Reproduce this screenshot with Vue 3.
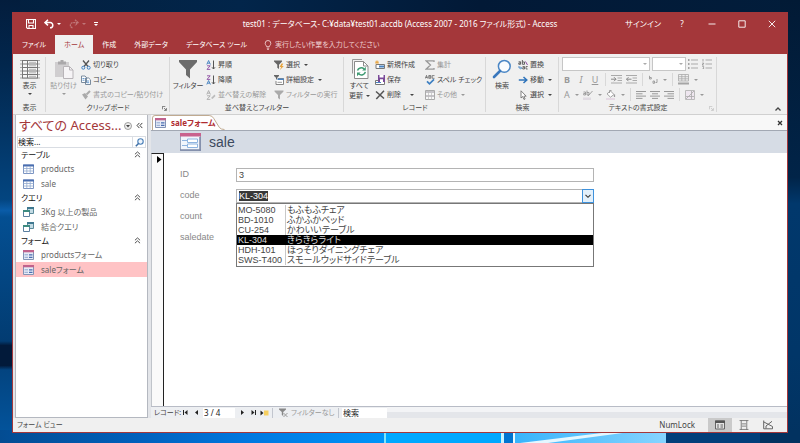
<script setup>
import { ref, onMounted } from 'vue'

const tabs = [
  { label: 'ファイル' },
  { label: 'ホーム', active: true },
  { label: '作成' },
  { label: '外部データ' },
  { label: 'データベース ツール' },
]

const groups = [
  {
    key: 'view',
    label: '表示',
    big: { icon: 'view', lines: ['表示'], caretBelow: true },
    columns: [],
  },
  {
    key: 'clipboard',
    label: 'クリップボード',
    launcher: true,
    big: { icon: 'paste', lines: ['貼り付け'], caretBelow: true, disabled: true },
    columns: [
      [
        { icon: 'cut', label: '切り取り' },
        { icon: 'copy', label: 'コピー' },
        { icon: 'brush', label: '書式のコピー/貼り付け', disabled: true },
      ],
    ],
  },
  {
    key: 'filter',
    label: '並べ替えとフィルター',
    big: { icon: 'funnel', lines: ['フィルター'] },
    columns: [
      [
        { icon: 'asc', label: '昇順' },
        { icon: 'desc', label: '降順' },
        { icon: 'unsort', label: '並べ替えの解除', disabled: true },
      ],
      [
        { icon: 'funnel-bolt', label: '選択', caret: true },
        { icon: 'funnel-adv', label: '詳細設定', caret: true },
        { icon: 'funnel-small', label: 'フィルターの実行', disabled: true },
      ],
    ],
  },
  {
    key: 'records',
    label: 'レコード',
    big: { icon: 'refresh', lines: ['すべて', '更新'], caret: true },
    columns: [
      [
        { icon: 'new', label: '新規作成' },
        { icon: 'save-record', label: '保存' },
        { icon: 'delete', label: '削除', caret: true, wide: true },
      ],
      [
        { icon: 'sigma', label: '集計', disabled: true },
        { icon: 'spell', label: 'スペル チェック' },
        { icon: 'more', label: 'その他', caret: true, disabled: true },
      ],
    ],
  },
  {
    key: 'find',
    label: '検索',
    big: { icon: 'find', lines: ['検索'] },
    columns: [
      [
        { icon: 'replace', label: '置換' },
        { icon: 'goto', label: '移動', caret: true },
        { icon: 'pointer', label: '選択', caret: true },
      ],
    ],
  },
]

const navGroups = [
  { label: 'テーブル', icon: 'table', items: ['products', 'sale'] },
  { label: 'クエリ', icon: 'query', items: ['3Kg 以上の製品', '結合クエリ'] },
  { label: 'フォーム', icon: 'form', items: ['productsフォーム', 'saleフォーム'] },
]
const openObject = 'saleフォーム'

const products = [
  ['MO-5080', 'もふもふチェア'],
  ['BD-1010', 'ふかふかベッド'],
  ['CU-254', 'かわいいテーブル'],
  ['KL-304', 'きらきらライト'],
  ['HDH-101', 'ほっそりダイニングチェア'],
  ['SWS-T400', 'スモールウッドサイドテーブル'],
]
const code = ref('KL-304')
const codeInput = ref(null)

onMounted(() => {
  codeInput.value.focus()
  codeInput.value.select()
})
</script>

<template>
  <div class="desktop">
    <svg class="wallpaper" viewBox="0 0 800 443" preserveAspectRatio="none" aria-hidden="true">
      <defs>
        <linearGradient id="wl" x1="0" y1="0" x2="0" y2="1">
          <stop offset="0" stop-color="#031d3d" /><stop offset=".14" stop-color="#02264c" />
          <stop offset=".3" stop-color="#033565" /><stop offset=".45" stop-color="#034580" />
          <stop offset=".475" stop-color="#0a5ca8" /><stop offset=".49" stop-color="#044f92" />
          <stop offset=".77" stop-color="#023c72" /><stop offset=".78" stop-color="#021a3a" />
          <stop offset=".825" stop-color="#021a3a" /><stop offset=".835" stop-color="#034480" />
          <stop offset="1" stop-color="#0356a0" />
        </linearGradient>
        <linearGradient id="wr" x1="0" y1="0" x2="0" y2="1">
          <stop offset="0" stop-color="#021a35" /><stop offset=".4" stop-color="#012448" />
          <stop offset=".46" stop-color="#01386c" /><stop offset=".8" stop-color="#013668" />
          <stop offset="1" stop-color="#023260" />
        </linearGradient>
        <linearGradient id="wt" x1="0" y1="0" x2="1" y2="0">
          <stop offset="0" stop-color="#03203f" /><stop offset=".3" stop-color="#02254a" />
          <stop offset=".6" stop-color="#021936" /><stop offset="1" stop-color="#021d3b" />
        </linearGradient>
        <linearGradient id="wb" x1="0" y1="0" x2="1" y2="0">
          <stop offset="0" stop-color="#034c92" /><stop offset=".36" stop-color="#0060bc" />
          <stop offset=".65" stop-color="#0078e0" /><stop offset="1" stop-color="#0094f8" />
        </linearGradient>
        <linearGradient id="wp" x1="0" y1="0" x2="1" y2="0">
          <stop offset="0" stop-color="#38b4fb" /><stop offset="1" stop-color="#86d4ff" />
        </linearGradient>
      </defs>
      <rect width="800" height="443" fill="url(#wt)" />
      <rect width="20" height="443" fill="url(#wl)" />
      <rect x="780" width="20" height="443" fill="url(#wr)" />
      <rect y="430" width="384" height="13" fill="url(#wb)" />
      <rect x="384" y="430" width="2" height="13" fill="#7fe4fb" />
      <rect x="386" y="430" width="115" height="13" fill="#00a8ff" />
      <rect x="501" y="430" width="3" height="13" fill="#c8f4ff" />
      <rect x="504" y="430" width="9" height="13" fill="#0074d0" />
      <rect x="513" y="430" width="2" height="13" fill="#e8fbff" />
      <rect x="515" y="430" width="151" height="13" fill="url(#wp)" />
      <path d="M520 443L610 432H630L548 443Z" fill="#e4f7ff" />
      <rect x="666" y="430" width="134" height="13" fill="#023f7a" />
      <rect x="760" y="430" width="40" height="13" fill="#023260" />
    </svg>

    <svg class="defs" aria-hidden="true">
      <symbol id="caret" viewBox="0 0 4 2"><path d="M0 0H4L2 2Z" fill="currentColor" /></symbol>
      <symbol id="save" viewBox="0 0 10 10"><path d="M.5.5H9.500V9.500H1.500L.5 8.500ZM2.500.5V4H7.500V.5M3 9.500V6.500H7V9.500" fill="none" stroke="currentColor" stroke-width="1.100" /></symbol>
      <symbol id="undo" viewBox="0 0 10 10"><path d="M4 .8L1 3.600L4 6.400M1.200 3.600H6.200C9.700 3.600 9.700 8.800 6 8.800" fill="none" stroke="currentColor" stroke-width="1.500" /></symbol>
      <symbol id="redo" viewBox="0 0 10 10"><path d="M6 .8L9 3.600L6 6.400M8.800 3.600H4C.5 3.600.5 8.800 4 8.800" fill="none" stroke="currentColor" stroke-width="1.300" stroke-dasharray="2 .6" /></symbol>
      <symbol id="bulb" viewBox="0 0 8 10"><path d="M2.600 6.700C2.600 5.500 1.200 5 1.200 3.300A2.800 2.800 0 0 1 6.800 3.300C6.800 5 5.400 5.500 5.400 6.700ZM2.800 8.200H5.200M3.200 9.500H4.800" fill="none" stroke="currentColor" stroke-width=".9" /></symbol>

      <symbol id="view" viewBox="0 0 20 20"><path d="M0 1.500H20M0 5H20M0 8.500H20M0 12H20M0 15.500H20M0 19H20" stroke="#a8a8a8" /><rect x="2.500" y="1.500" width="15" height="17.500" fill="#f8f8f8" stroke="#777" /><path d="M7.500 2V19M2 5H18M2 8.500H18M2 12H18M2 15.500H18" stroke="#777" /><path d="M9 3.300H16M9 6.800H16M9 10.300H16M9 13.800H16M9 17.300H16" stroke="#b5b5b5" /></symbol>
      <symbol id="paste" viewBox="0 0 20 20"><path d="M1 3H15V18H1Z" fill="#d0ced0" /><path d="M4 2.500H6.500V1H9.500V2.500H12V5.500H4Z" fill="#aaa8aa" /><path d="M9.500 7.500H15.500L19 11V19.500H9.500Z" fill="#f6f4f6" stroke="#b8b4b8" /><path d="M15.500 7.500V11H19" fill="none" stroke="#b8b4b8" /></symbol>
      <symbol id="funnel" viewBox="0 0 20 20"><path d="M1 1H19V3L12 10.500V19.500L8 16V10.500L1 3Z" fill="#6c6c6c" /></symbol>
      <symbol id="refresh" viewBox="0 0 20 20"><path d="M2.500 14.500V.5H12" fill="none" stroke="#999" /><path d="M4.500 2.500H13.500L18 7V19.500H4.500Z" fill="#fff" stroke="#8b8b8b" /><path d="M13.500 2.500V7H18" fill="none" stroke="#8b8b8b" /><path d="M7.500 11.500A4 3.600 0 0 1 14 9.800M15.300 12.800A4 3.600 0 0 1 8.700 15" fill="none" stroke="#3e9a72" stroke-width="1.500" /><path d="M15.800 7.800V11.500H12.200ZM7 17.200V13.400H10.600Z" fill="#3e9a72" /></symbol>
      <symbol id="find" viewBox="0 0 20 20"><circle cx="12.300" cy="7.300" r="5.900" fill="#fafcfe" stroke="#4a86c5" stroke-width="1.500" /><path d="M8 12L2 18" stroke="#3a78bd" stroke-width="2.600" stroke-linecap="round" /></symbol>

      <symbol id="cut" viewBox="0 0 10 10"><path d="M2 .5L7 6.500M8 .5L3 6.500" stroke="#555" stroke-width="1.300" /><circle cx="2.300" cy="7.700" r="1.500" fill="none" stroke="#3f80c2" /><circle cx="7.700" cy="7.700" r="1.500" fill="none" stroke="#3f80c2" /></symbol>
      <symbol id="copy" viewBox="0 0 10 10"><path d="M.5 1H4L5.500 2.500V7.500H.5ZM4.500 3H7.700L9.500 4.800V9.500H4.500Z" fill="#fff" stroke="#6b7f94" stroke-width=".9" /><path d="M1.500 3.500H3.500M1.500 5.200H3.500M5.700 6H8.200M5.700 7.700H8.200" stroke="#3f80c2" stroke-width=".8" /></symbol>
      <symbol id="brush" viewBox="0 0 10 10"><path d="M1 4.500L4 3L7 6.500L4.500 9.500Z" fill="#aaa" /><path d="M5.500 4.500L9 1" stroke="#aaa" stroke-width="2" /></symbol>
      <symbol id="asc" viewBox="0 0 10 10"><path d="M.8 4.500L2.600.5L4.400 4.500M1.500 3.200H3.700" fill="none" stroke="#3f7fc0" stroke-width=".9" /><path d="M1 5.800H4.200L1 9.400H4.300" fill="none" stroke="#8a4aa0" stroke-width=".9" /><path d="M7.500.5V9M6 7.300L7.500 9L9 7.300" fill="none" stroke="#555" /></symbol>
      <symbol id="desc" viewBox="0 0 10 10"><path d="M1 .8H4.200L1 4.400H4.300" fill="none" stroke="#8a4aa0" stroke-width=".9" /><path d="M.8 9.500L2.600 5.500L4.400 9.500M1.500 8.200H3.700" fill="none" stroke="#3f7fc0" stroke-width=".9" /><path d="M7.500.5V9M6 7.300L7.500 9L9 7.300" fill="none" stroke="#555" /></symbol>
      <symbol id="unsort" viewBox="0 0 10 10"><path d="M.8 4.500L2.600.5L4.400 4.500M1.500 3.200H3.700M1 5.800H4.200L1 9.400H4.300" fill="none" stroke="#aaa" stroke-width=".9" /><path d="M5 8L8.500 4.500L9.500 6L6.500 9Z" fill="#bbb" /></symbol>
      <symbol id="funnel-bolt" viewBox="0 0 10 10"><path d="M0 .5H8V1.500L5 4.800V9L3.300 7.700V4.800L0 1.500Z" fill="#666" /><path d="M7.500 3.500L5.500 7H7.200L6 10L9.800 6H8L9.300 3.500Z" fill="#e8a33c" /></symbol>
      <symbol id="funnel-adv" viewBox="0 0 10 10"><path d="M0 0H5V1L3.200 2.800V5L2 4V2.800L0 1Z" fill="#666" /><path d="M4 3.500H9.500V9.500H2V6" fill="#fff" stroke="#777" stroke-width=".9" /><path d="M3.500 3.500H9.900V5H3.500Z" fill="#4a84c2" /><path d="M3.500 7.300H8" stroke="#999" /></symbol>
      <symbol id="funnel-small" viewBox="0 0 10 10"><path d="M.5.5H9.500V1.500L6 5V9.500L4 8V5L.5 1.500Z" fill="#aaa" /></symbol>
      <symbol id="new" viewBox="0 0 10 10"><path d="M1 4.500H9.500V8.500H1Z" fill="#fff" stroke="#777" /><path d="M4 5.500H9V7.500H4Z" fill="#4a84c2" /><path d="M2 .3V4.300M0 2.300H4M.6.9L3.400 3.700M3.400.9L.6 3.700" stroke="#e8a33c" stroke-width=".8" /></symbol>
      <symbol id="save-record" viewBox="0 0 10 10"><path d="M.5 5.500H9.500V9.500H.5Z" fill="#fff" stroke="#777" /><path d="M1 7.500H6" stroke="#4a84c2" /><path d="M3 0H10V7H3Z" fill="#7a4a98" /><path d="M4.500 0H8.500V2.500H4.500ZM5 4.300H8V7H5Z" fill="#fff" /></symbol>
      <symbol id="delete" viewBox="0 0 10 10"><path d="M1 1.500L9 8.500M9 .8L1.300 9" stroke="#555" stroke-width="1.500" /></symbol>
      <symbol id="sigma" viewBox="0 0 10 10"><path d="M9 2V.8H1L5.500 5L1 9.200H9V8" fill="none" stroke="#999" stroke-width="1.300" /></symbol>
      <symbol id="spell" viewBox="0 0 10 10"><path d="M.3 3.500L1.500.4L2.700 3.500M.8 2.500H2.200M3.800.5V3.300H5.800V.5H3.800M3.800 1.900H5.800M9.500.6H7.200V3.300H9.500" fill="none" stroke="#555" stroke-width=".7" /><path d="M2 6.300L4.500 8.800L9 4.300" fill="none" stroke="#3f80c2" stroke-width="1.700" /></symbol>
      <symbol id="more" viewBox="0 0 10 10"><path d="M.5.500H9.500V9.500H.5Z" fill="#f8f8f8" stroke="#aaa" /><path d="M1 1H9V3H1ZM1 5H9V7H1Z" fill="#c5c3c8" /><path d="M3.500.5V9.500M6.500 3V9.500" stroke="#bbb" stroke-width=".7" /></symbol>
      <symbol id="replace" viewBox="0 0 10 10"><path d="M.6 1.800H2.600V4.300H.8V3H2.600M4.400 0V4.300H6.500V2H4.400" fill="none" stroke="#555" stroke-width=".9" /><path d="M4.600 6.500H6.500V9H4.700V7.700H6.500M9.700 6.500H8V9H9.700" fill="none" stroke="#555" stroke-width=".8" /><path d="M1 6V8H3.500M2.500 7L3.700 8L2.500 9" fill="none" stroke="#3f80c2" stroke-width=".9" /><path d="M7.500 1.500L9.500 5" stroke="#8a4aa0" /></symbol>
      <symbol id="goto" viewBox="0 0 10 10"><path d="M.8 5H8.500M5.500 2L8.800 5L5.500 8" fill="none" stroke="#2f74bb" stroke-width="1.500" /></symbol>
      <symbol id="pointer" viewBox="0 0 10 10"><path d="M3 .8V8L4.700 6.500L6 9.500L7.100 9L5.900 6.200H8.200Z" fill="#fff" stroke="#666" stroke-width=".8" /></symbol>
      <symbol id="launcher" viewBox="0 0 6 6"><path d="M.5 4V.5H4M2.500 2.500L5 5M5.300 2.500V5.300H2.500" fill="none" stroke="currentColor" stroke-width=".8" /></symbol>

      <symbol id="bullets" viewBox="0 0 10 10"><path d="M0 1H1.500M0 5H1.500M0 9H1.500" stroke="#888" stroke-width="1.500" /><path d="M3 1H10M3 5H10M3 9H10" stroke="#aaa" /></symbol>
      <symbol id="numbers" viewBox="0 0 10 10"><path d="M1 0V2.500M.3 4H1.600V5H.4V6.200H1.700M.3 7.500H1.600V10H.3" fill="none" stroke="#888" stroke-width=".7" /><path d="M3.500 1H10M3.500 5H10M3.500 9H10" stroke="#aaa" /></symbol>
      <symbol id="outdent" viewBox="0 0 11 10"><path d="M0 1H11M6.500 3.500H11M6.500 6H11M0 8.500H11" stroke="#aaa" /><path d="M0 4.700H5M3 2.700L5 4.700L3 6.700" fill="none" stroke="#888" /></symbol>
      <symbol id="indent" viewBox="0 0 11 10"><path d="M0 1H11M6.500 3.500H11M6.500 6H11M0 8.500H11" stroke="#aaa" /><path d="M.5 4.700H5.500M2.500 2.700L.5 4.700L2.500 6.700" fill="none" stroke="#888" /></symbol>
      <symbol id="direction" viewBox="0 0 10 10"><path d="M1.500 .8V4H3.300V2.500H1.500M5 6H6.500V8.300H5V6M9 4V7.500H7.500" fill="none" stroke="#999" stroke-width=".9" /></symbol>
      <symbol id="gridlines" viewBox="0 0 11 11"><path d="M.5.5H10.500V7H.5ZM.5 2.700H10.500M.5 4.800H10.500M3.800.5V7M7.200.5V7" fill="none" stroke="#aaa" stroke-width=".8" /><path d="M0 8.500H11V10.500H0Z" fill="#a5a5a5" /></symbol>
      <symbol id="highlight" viewBox="0 0 10 10"><path d="M.5 2H2.500V5H.7V3.500H2.500M4 .5V5H6V2.500H4M9.500 1L5 6" fill="none" stroke="#999" stroke-width=".9" /><path d="M0 7.500H8V10H0Z" fill="#e0dbe2" /></symbol>
      <symbol id="bucket" viewBox="0 0 10 10"><path d="M1 3.800L4.500 1L8 4.500L4.500 7.200ZM3.500 3V.5H5.500" fill="#fff" stroke="#999" stroke-width=".9" /><path d="M8.500 4.500V7" stroke="#999" stroke-width="1.200" /><path d="M0 8H9V10H0Z" fill="#e5d9e4" /></symbol>
      <symbol id="left" viewBox="0 0 10 8"><path d="M0 .5H10M0 2.800H6.500M0 5.100H10M0 7.400H6.500" stroke="#999" /></symbol>
      <symbol id="center" viewBox="0 0 10 8"><path d="M0 .5H10M2 2.800H8M0 5.100H10M2 7.400H8" stroke="#999" /></symbol>
      <symbol id="right" viewBox="0 0 10 8"><path d="M0 .5H10M3.500 2.800H10M0 5.100H10M3.500 7.400H10" stroke="#999" /></symbol>
      <symbol id="altrow" viewBox="0 0 10 10"><path d="M.5.5H9.500V9.500H.5Z" fill="#eee6ef" stroke="#bbb" /><path d="M1 9L9 1M1 6.500H9M6.500 1V9" stroke="#aaa" stroke-width=".8" /></symbol>

      <symbol id="table" viewBox="0 0 11 10"><path d="M.5 1H10.500V9.500H.5Z" fill="#fff" stroke="#7c95c2" /><path d="M0 .5H11V2.500H0Z" fill="#4a6fb0" /><path d="M.5 4.500H10.500M.5 7H10.500M3.800 2V9.500M7.200 2V9.500" stroke="#93abcf" stroke-width=".8" /></symbol>
      <symbol id="query" viewBox="0 0 11 10"><path d="M4.500.5H10.500V6.500H4.500Z" fill="#c3dbe4" stroke="#5b8a9a" /><path d="M4 0H11V2H4Z" fill="#3f7890" /><path d="M.5 3.500H6.500V9.500H.5Z" fill="#fff" stroke="#5b7fa0" /><path d="M0 3H7V5H0Z" fill="#3d8a80" /></symbol>
      <symbol id="form" viewBox="0 0 11 10"><path d="M.5.5H10.500V9.500H.5Z" fill="#e6ebf6" stroke="#8393b5" /><path d="M0 0H11V2.300H0Z" fill="#c0628c" /><path d="M1.500 4.800H5M1.500 7.300H5" stroke="#8ea6d0" /><path d="M6 4.200H9.500V5.600H6ZM6 6.700H9.500V8.100H6Z" fill="#4a6db0" /></symbol>
      <symbol id="form-large" viewBox="0 0 21 18"><path d="M1 .5H20.500V17.500H.5V.5" fill="#f1f5fc" stroke="#9aa6bd" /><path d="M0 0H21V3.500H0Z" fill="#c9628e" /><path d="M20 4V18M0 17H21" stroke="#7f8ba8" stroke-width="1.500" /><path d="M2 7.500H7M2 12.500H7" stroke="#8fb4e0" /><path d="M7.500 6H17.500V9.500H7.500ZM7.500 11H17.500V14.500H7.500Z" fill="#fff" stroke="#8fb4e0" /></symbol>
      <symbol id="chevrons-up" viewBox="0 0 6 6"><path d="M.8 2.800L3 .8L5.200 2.800M.8 5.300L3 3.300L5.200 5.300" fill="none" stroke="#444" stroke-width=".8" /></symbol>
      <symbol id="chevrons-left" viewBox="0 0 6 6"><path d="M2.900.8L.9 3L2.900 5.200M5.400.8L3.400 3L5.400 5.200" fill="none" stroke="#333" stroke-width=".8" /></symbol>
      <symbol id="menu-circle" viewBox="0 0 8 8"><circle cx="4" cy="4" r="3.500" fill="#eee" stroke="#888" stroke-width=".8" /><path d="M2 3H6L4 5.500Z" fill="#444" /></symbol>
      <symbol id="lens" viewBox="0 0 9 9"><circle cx="5.500" cy="3.500" r="2.700" fill="#eef5fc" stroke="#4a7fb8" stroke-width="1.100" /><path d="M3.500 5.500L.8 8.200" stroke="#3f6fa5" stroke-width="1.500" /></symbol>

      <symbol id="first" viewBox="0 0 7 7"><path d="M1.500 1V6" stroke="#222" /><path d="M5.500 1V6L2.500 3.500Z" fill="#222" /></symbol>
      <symbol id="prev" viewBox="0 0 7 7"><path d="M5 1V6L2 3.500Z" fill="#222" /></symbol>
      <symbol id="next" viewBox="0 0 7 7"><path d="M2 1V6L5 3.500Z" fill="#222" /></symbol>
      <symbol id="last" viewBox="0 0 7 7"><path d="M5.500 1V6" stroke="#222" /><path d="M1.500 1V6L4.500 3.500Z" fill="#222" /></symbol>
      <symbol id="add" viewBox="0 0 9 6"><path d="M.5.500V5.500L3.500 3Z" fill="#222" /><path d="M4 .5H8.500V5.500H4Z" fill="#f6cf60" /></symbol>
      <symbol id="nofilter" viewBox="0 0 9 9"><path d="M0 .5H7V1.500L4.200 4V8L2.800 7V4L0 1.500Z" fill="#888" /><path d="M4.500 5L8.500 9M8.500 5L4.500 9" stroke="#999" /></symbol>
      <symbol id="form-view" viewBox="0 0 10 9"><path d="M.5.5H9.500V8.500H.5Z" fill="#e4e4e4" stroke="#666" /><path d="M0 0H10V2.500H0Z" fill="#555" /><path d="M2 4.500H4M5.500 4.500H8M2 6.500H4M5.500 6.500H8" stroke="#666" /></symbol>
      <symbol id="layout-view" viewBox="0 0 8 9"><path d="M1.500 0V9M6.500 0V9M0 .5H8M0 8.500H8M2 3.500H6M2 5.500H6" fill="none" stroke="#777" stroke-width=".8" /></symbol>
      <symbol id="design-view" viewBox="0 0 10 9"><path d="M.7 0V8.300H9.500V6L.9 1.500M3 5.500L9 .8M3 5.500V8" fill="none" stroke="#666" /></symbol>
    </svg>

    <main class="window">
      <header class="titlebar">
        <div class="quick">
          <button aria-label="上書き保存"><svg class="i10"><use href="#save" /></svg></button>
          <button aria-label="元に戻す" class="gap"><svg class="i10"><use href="#undo" /></svg><svg class="caret"><use href="#caret" /></svg></button>
          <button aria-label="やり直し" class="gap faded" disabled><svg class="i10"><use href="#redo" /></svg><svg class="caret"><use href="#caret" /></svg></button>
          <button aria-label="カスタマイズ" class="custom"><svg class="caret"><use href="#caret" /></svg></button>
        </div>
        <h1>test01 : データベース- C:¥data¥test01.accdb (Access 2007 - 2016 ファイル形式) - Access</h1>
        <div class="controls">
          <a href="#">サインイン</a>
          <button aria-label="ヘルプ">?</button>
          <button aria-label="最小化"><svg class="i8" viewBox="0 0 8 8"><path d="M.5 4H7.500" stroke="#fff" stroke-width=".9" /></svg></button>
          <button aria-label="最大化"><svg class="i8" viewBox="0 0 8 8"><path d="M.8.8H7.200V7.200H.8Z" fill="none" stroke="#fff" stroke-width=".9" /></svg></button>
          <button aria-label="閉じる"><svg class="i8" viewBox="0 0 8 8"><path d="M.8.8L7.200 7.200M7.200.8L.8 7.200" stroke="#fff" stroke-width=".9" /></svg></button>
        </div>
      </header>

      <nav class="tabs">
        <button v-for="t in tabs" :key="t.label" :class="{ active: t.active }">{{ t.label }}</button>
        <button class="tell"><svg class="bulb"><use href="#bulb" /></svg>実行したい作業を入力してください</button>
      </nav>

      <section class="ribbon">
        <div v-for="g in groups" :key="g.key" class="group" :class="g.key">
          <div class="body">
            <button class="big" :disabled="g.big.disabled">
              <svg class="i20"><use :href="'#' + g.big.icon" /></svg>
              <span v-for="(line, n) in g.big.lines" :key="line" class="line">
                {{ line }}<svg v-if="g.big.caret && n" class="caret"><use href="#caret" /></svg>
              </span>
              <svg v-if="g.big.caretBelow" class="caret below"><use href="#caret" /></svg>
            </button>
            <div v-for="(col, n) in g.columns" :key="n" class="column">
              <button v-for="c in col" :key="c.label" class="command" :class="{ wide: c.wide }" :disabled="c.disabled">
                <svg class="i10"><use :href="'#' + c.icon" /></svg>
                <span>{{ c.label }}</span>
                <svg v-if="c.caret" class="caret"><use href="#caret" /></svg>
              </button>
            </div>
          </div>
          <div class="caption">{{ g.label }}<svg v-if="g.launcher" class="launcher"><use href="#launcher" /></svg></div>
        </div>

        <div class="group format">
          <div class="formatting">
            <div class="row first">
              <span class="select family"><select aria-label="フォント" disabled></select><svg class="caret"><use href="#caret" /></svg></span>
              <span class="select size"><select aria-label="フォント サイズ" disabled></select><svg class="caret"><use href="#caret" /></svg></span>
              <button aria-label="箇条書き" disabled><svg class="i10"><use href="#bullets" /></svg></button>
              <button aria-label="段落番号" class="numbers" disabled><svg class="i10"><use href="#numbers" /></svg></button>
            </div>
            <div class="row">
              <button class="letter" disabled><b>B</b></button>
              <button class="letter" disabled><i>I</i></button>
              <button class="letter" disabled><u>U</u></button>
              <span class="sep"></span>
              <button aria-label="インデント" disabled><svg class="i11"><use href="#outdent" /></svg></button>
              <button aria-label="インデント解除" disabled><svg class="i11"><use href="#indent" /></svg></button>
              <span class="sep"></span>
              <button aria-label="文字方向" class="drop" disabled><svg class="i10"><use href="#direction" /></svg><svg class="caret"><use href="#caret" /></svg></button>
              <span class="sep"></span>
              <button aria-label="枠線" class="drop" disabled><svg class="i11"><use href="#gridlines" /></svg><svg class="caret"><use href="#caret" /></svg></button>
            </div>
            <div class="row">
              <button class="drop letter-a" disabled>A<svg class="caret"><use href="#caret" /></svg></button>
              <button aria-label="蛍光ペン" class="drop" disabled><svg class="i10"><use href="#highlight" /></svg><svg class="caret"><use href="#caret" /></svg></button>
              <button aria-label="背景色" class="drop" disabled><svg class="i10"><use href="#bucket" /></svg><svg class="caret"><use href="#caret" /></svg></button>
              <span class="sep"></span>
              <button aria-label="左揃え" disabled><svg class="align"><use href="#left" /></svg></button>
              <button aria-label="中央揃え" disabled><svg class="align"><use href="#center" /></svg></button>
              <button aria-label="右揃え" disabled><svg class="align"><use href="#right" /></svg></button>
              <span class="sep"></span>
              <button aria-label="交互の行の色" class="drop" disabled><svg class="i10"><use href="#altrow" /></svg><svg class="caret"><use href="#caret" /></svg></button>
            </div>
          </div>
          <div class="caption">テキストの書式設定<svg class="launcher pale"><use href="#launcher" /></svg></div>
        </div>

        <button class="collapse" aria-label="リボンを折りたたむ"><svg class="i8" viewBox="0 0 8 8"><path d="M1.500 5.500L4 3L6.500 5.500" fill="none" stroke="#444" stroke-width="1.300" /></svg></button>
      </section>

      <div class="workspace">
        <aside class="objects">
          <div class="objects-head">
            <h2>すべての Access...</h2>
            <button aria-label="メニュー"><svg class="i8"><use href="#menu-circle" /></svg></button>
            <button aria-label="ウィンドウを閉じる"><svg class="i7"><use href="#chevrons-left" /></svg></button>
          </div>
          <div class="objects-search">
            <input aria-label="オブジェクトの検索" value="検索..." />
            <button aria-label="検索"><svg class="i9"><use href="#lens" /></svg></button>
          </div>
          <section v-for="g in navGroups" :key="g.label">
            <h3>{{ g.label }}<svg class="i7"><use href="#chevrons-up" /></svg></h3>
            <a v-for="item in g.items" :key="item" href="#" :class="{ selected: item === openObject }">
              <svg class="object-icon"><use :href="'#' + g.icon" /></svg>{{ item }}
            </a>
          </section>
        </aside>

        <section class="document">
          <div class="doc-tabs">
            <button class="doc-tab">
              <svg class="tab-shape" viewBox="0 0 72 15" preserveAspectRatio="none" aria-hidden="true"><path d="M.5 15V3Q.5.5 3 .5H56Q59 .5 60.500 3.500L66 12.500Q67.500 14.500 71 14.500L71 15Z" fill="#fff" /><path d="M.5 15V3Q.5.5 3 .5H56Q59 .5 60.500 3.500L66 12.500Q67.500 14.500 71 14.500" fill="none" stroke="#b9a184" stroke-width=".9" /></svg>
              <svg class="object-icon"><use href="#form" /></svg><span>{{ openObject }}</span>
            </button>
            <button class="doc-close" aria-label="閉じる"><svg class="i8" viewBox="0 0 8 8"><path d="M2 2L6 6M6 2L2 6" stroke="#333" stroke-width="1.300" /></svg></button>
          </div>
          <div class="form-head">
            <svg class="form-icon"><use href="#form-large" /></svg>
            <h2>sale</h2>
          </div>
          <div class="form-body">
            <button class="record-selector" aria-label="レコード セレクター"><svg class="marker" viewBox="0 0 5 7"><path d="M0 0V7L4.500 3.500Z" fill="#000" /></svg></button>
            <form class="fields" @submit.prevent>
              <label for="f-id">ID</label>
              <input id="f-id" class="box" value="3" />
              <label for="f-code">code</label>
              <div class="combo">
                <input id="f-code" ref="codeInput" v-model="code" class="box" role="combobox" aria-expanded="true" aria-controls="codes" autocomplete="off" spellcheck="false" />
                <button type="button" class="arrow" aria-label="一覧"><svg class="i8" viewBox="0 0 8 8"><path d="M1.500 2.800L4 5.300L6.500 2.800" fill="none" stroke="#333" stroke-width="1.100" /></svg></button>
                <ul id="codes" class="options" role="listbox">
                  <li v-for="p in products" :key="p[0]" role="option" :aria-selected="p[0] === code" :class="{ current: p[0] === code }" @click="code = p[0]">
                    <span>{{ p[0] }}</span><span>{{ p[1] }}</span>
                  </li>
                </ul>
              </div>
              <label for="f-count">count</label>
              <input id="f-count" class="box" />
              <label for="f-date">saledate</label>
              <input id="f-date" class="box" />
            </form>
          </div>
          <footer class="record-nav">
            <label for="rec">レコード:</label>
            <button aria-label="先頭" class="step"><svg class="i7"><use href="#first" /></svg></button>
            <button aria-label="前" class="step"><svg class="i7"><use href="#prev" /></svg></button>
            <input id="rec" class="rec" value="3 / 4" />
            <button aria-label="次" class="step"><svg class="i7"><use href="#next" /></svg></button>
            <button aria-label="最終" class="step"><svg class="i7"><use href="#last" /></svg></button>
            <button aria-label="新規" class="step"><svg class="add"><use href="#add" /></svg></button>
            <button class="nofilter" disabled><svg class="i9"><use href="#nofilter" /></svg>フィルターなし</button>
            <input class="rec-search" aria-label="レコード検索" value="検索" />
            <div class="scroll"></div>
          </footer>
        </section>
      </div>

      <footer class="status">
        <span class="mode">フォーム ビュー</span>
        <span class="lock">NumLock</span>
        <button class="active" aria-label="フォーム ビュー"><svg class="i10"><use href="#form-view" /></svg></button>
        <button aria-label="レイアウト ビュー"><svg class="i10"><use href="#layout-view" /></svg></button>
        <button aria-label="デザイン ビュー"><svg class="i10"><use href="#design-view" /></svg></button>
      </footer>
    </main>
  </div>
</template>

<style>
body {
  margin: 0;
}
</style>

<style scoped>
.desktop {
  position: relative;
  display: flex;
  box-sizing: border-box;
  min-height: 100vh;
  padding: 12px 12px 10px;
  background: #021d3b;
  font-family: "Noto Sans", "Noto Sans CJK JP", sans-serif;
  font-feature-settings: "palt";
  font-size: 8px;
  line-height: 10px;
  color: #444;
}
.desktop * {
  box-sizing: border-box;
}
.wallpaper {
  position: absolute;
  inset: 0;
  width: 100%;
  height: 100%;
}
.defs {
  position: absolute;
  width: 0;
  height: 0;
}
svg {
  display: block;
  flex: none;
}
button,
input,
select {
  font: inherit;
  font-feature-settings: inherit;
  color: inherit;
  margin: 0;
  padding: 0;
  border: 0;
  background: none;
  border-radius: 0;
  outline: 0;
  min-width: 0;
}
button {
  display: flex;
  align-items: center;
  white-space: nowrap;
}
button:disabled {
  color: #999;
}
a {
  color: inherit;
  text-decoration: none;
}
h1,
h2,
h3,
ul {
  margin: 0;
  padding: 0;
  font-weight: normal;
}
.i7 { width: 7px; height: 7px; }
.i8 { width: 8px; height: 8px; }
.i9 { width: 9px; height: 9px; }
.i10 { width: 10px; height: 10px; }
.i11 { width: 11px; height: 11px; }
.i20 { width: 20px; height: 20px; }
.caret { width: 4px; height: 2px; }

.window {
  position: relative;
  flex: 1;
  min-width: 0;
  display: flex;
  flex-direction: column;
  background: #f0f0f0;
  border: 1px solid #a4373a;
  border-top: 0;
}

/* Title bar */
.titlebar {
  display: grid;
  grid-template-columns: 1fr auto 1fr;
  align-items: center;
  height: 23px;
  background: #a4373a;
  color: #fff;
}
.quick {
  display: flex;
  align-items: center;
  gap: 8px;
  padding-left: 13px;
}
.quick .gap {
  gap: 3px;
}
.quick .faded {
  color: #c07678;
}
.quick .custom {
  border-top: 1px solid #fff;
  padding-top: 1px;
}
.titlebar h1 {
  font-size: 8px;
  white-space: nowrap;
}
.controls {
  display: flex;
  align-items: center;
  justify-content: flex-end;
  padding-right: 11px;
}
.controls a {
  margin-right: 17px;
}
.controls button {
  justify-content: center;
  width: 8px;
}
.controls button + button {
  margin-left: 22px;
}

/* Tabs */
.tabs {
  display: flex;
  height: 19px;
  background: #a4373a;
  color: #fff;
  font-size: 7px;
}
.tabs button {
  padding: 0 9px;
}
.tabs .active {
  background: #f0f0f0;
  color: #a4373a;
}
.tabs .tell {
  gap: 3px;
  padding-left: 8px;
  color: #efcfd0;
}
.bulb {
  width: 8px;
  height: 10px;
}

/* Ribbon */
.ribbon {
  display: grid;
  grid-template-columns: 33px 124px 174px 142px 73px 158px 1fr;
  height: 61px;
  padding-top: 3px;
  border-bottom: 1px solid #d0d0d0;
  font-size: 7px;
}
.group {
  display: flex;
  flex-direction: column;
  position: relative;
  min-width: 0;
}
.group::after {
  content: "";
  position: absolute;
  right: 0;
  top: 0;
  bottom: 2px;
  width: 1px;
  background: #d8d8d8;
}
.body {
  display: grid;
  height: 45px;
}
.view .body { grid-template-columns: 33px; }
.clipboard .body { grid-template-columns: 35px 1fr; }
.filter .body { grid-template-columns: 36px 68px 1fr; }
.records .body { grid-template-columns: 31px 50px 1fr; }
.find .body { grid-template-columns: 32px 1fr; }
.big {
  flex-direction: column;
  align-items: center;
  padding-top: 2px;
}
.big .i20 {
  margin-bottom: 2px;
}
.line {
  display: flex;
  align-items: center;
  gap: 3px;
}
.below {
  margin-top: 2px;
}
.command {
  height: 15px;
  gap: 2px;
}
.command .caret {
  margin-left: 2px;
}
.wide .caret {
  margin-left: 7px;
}
.caption {
  height: 12px;
  line-height: 12px;
  text-align: center;
  color: #444;
  white-space: nowrap;
}
.launcher {
  position: absolute;
  right: 3px;
  bottom: 3px;
  width: 5px;
  height: 5px;
}
.pale {
  color: #bbb;
}
.formatting {
  height: 45px;
  padding-left: 3px;
}
.row {
  display: flex;
  align-items: center;
  height: 15px;
  gap: 4px;
}
.row.first {
  gap: 2px;
  height: 14px;
  margin-bottom: 1px;
}
.select {
  display: flex;
  align-items: center;
  height: 14px;
  padding-right: 2px;
  background: #fff;
  border: 1px solid #c6c6c6;
  color: #aaa;
}
.select select {
  flex: 1;
  appearance: none;
}
.family { width: 88px; }
.size { width: 34px; }
.numbers { margin-left: 2px; }
.letter {
  justify-content: center;
  width: 10px;
  font-size: 9px;
}
.letter-a {
  padding-left: 2px;
  font-size: 9px;
}
.drop {
  gap: 5px;
}
.sep {
  width: 1px;
  height: 13px;
  margin: 0 1px;
  background: #d8d8d8;
}
.align {
  width: 10px;
  height: 8px;
}
.collapse {
  justify-self: end;
  align-self: end;
  padding: 0 5px 1px 0;
}

/* Workspace */
.workspace {
  flex: 1;
  display: flex;
  min-height: 0;
  padding-left: 2px;
  background: #e3e5e9;
}
.objects {
  display: flex;
  flex-direction: column;
  width: 133px;
  margin-right: 3px;
  background: #fff;
  border: 1px solid #b4b8c0;
  border-top: 0;
}
.objects-head {
  display: flex;
  align-items: center;
  height: 21px;
  padding-left: 3px;
  color: #a4373a;
}
.objects-head h2 {
  flex: 1;
  font-size: 13px;
  line-height: 21px;
  white-space: nowrap;
}
.objects-head button {
  margin-right: 4px;
}
.objects-search {
  display: flex;
  height: 12px;
  margin: 0 1px;
  border: 1px solid #d9dde3;
  color: #111;
}
.objects-search input {
  flex: 1;
}
.objects-search button {
  width: 13px;
  justify-content: center;
  border-left: 1px solid #d9dde3;
}
.objects h3 {
  display: flex;
  align-items: center;
  justify-content: space-between;
  height: 13px;
  padding: 0 6px 0 5px;
  font-size: 8px;
  color: #111;
}
.objects section a {
  display: flex;
  align-items: center;
  gap: 7px;
  height: 15px;
  padding-left: 7px;
  color: #666;
}
.objects section .selected {
  background: #ffc3c5;
}
.object-icon {
  width: 11px;
  height: 10px;
}

.document {
  flex: 1;
  min-width: 0;
  display: flex;
  flex-direction: column;
}
.doc-tabs {
  display: flex;
  justify-content: space-between;
  height: 16px;
  padding-left: 1px;
  background: #f8f8f8;
  border-bottom: 1px solid #a2a8b3;
}
.doc-tab {
  position: relative;
  gap: 5px;
  padding: 0 10px 0 3px;
  font-weight: bold;
  color: #b02c30;
}
.doc-tab .object-icon,
.doc-tab span {
  position: relative;
}
.tab-shape {
  position: absolute;
  inset: 0;
  width: 100%;
  height: 100%;
}
.doc-close {
  padding-right: 3px;
}
.form-head {
  display: flex;
  align-items: center;
  gap: 8px;
  height: 22px;
  padding-left: 29px;
  background: #d6dce5;
}
.form-icon {
  width: 21px;
  height: 18px;
}
.form-head h2 {
  font: 14px/20px "Liberation Sans", sans-serif;
  color: #3c4a5e;
}
.form-body {
  flex: 1;
  display: flex;
  background: #fff;
}
.record-selector {
  align-items: flex-start;
  width: 13px;
  padding: 2px 0 0 5px;
  background: #fafafa;
  border: solid #222;
  border-width: 1px 1px 0 0;
  border-left: 1px solid #c0c4ca;
}
.marker {
  width: 5px;
  height: 7px;
}
.fields {
  display: grid;
  grid-template-columns: 56px minmax(0, 358px);
  grid-auto-rows: 14px;
  gap: 7px 0;
  align-content: start;
  flex: 1;
  padding: 15px 16px 0;
  font-family: "Liberation Sans", "Noto Sans CJK JP", sans-serif;
  font-size: 9px;
}
.fields label {
  color: #888;
  line-height: 12px;
}
.box {
  width: 100%;
  height: 14px;
  padding: 0 2px;
  border: 1px solid #b4b4b4;
  background: #fff;
  color: #444;
}
.box::selection {
  background: #383838;
  color: #fff;
}
.combo {
  position: relative;
}
.arrow {
  position: absolute;
  top: 0;
  right: 0;
  justify-content: center;
  width: 12px;
  height: 14px;
  border: 1px solid #3f92dc;
  background: #e3f0fb;
}
.options {
  position: absolute;
  top: 14px;
  left: 0;
  right: 0;
  padding: 1px 0;
  list-style: none;
  background: #fff;
  border: 1px solid #777;
}
.options li {
  display: grid;
  grid-template-columns: 48px 1fr;
  line-height: 10px;
  white-space: nowrap;
}
.options span {
  padding-left: 1px;
}
.options span + span {
  border-left: 1px solid #c8c8c8;
}
.options .current {
  background: #000;
  color: #ddd;
}
.options .current span + span {
  border-color: #000;
}

.record-nav {
  display: flex;
  align-items: center;
  height: 12px;
  background: #edeff2;
  border-top: 1px solid #b8bcc6;
  padding-left: 3px;
}
.record-nav label {
  width: 26px;
  font-size: 7px;
  white-space: nowrap;
}
.step {
  width: 11px;
  height: 10px;
  justify-content: center;
}
.add {
  width: 9px;
  height: 6px;
}
.rec {
  width: 32px;
  height: 10px;
  margin: 0 2px 0 1px;
  padding-left: 1px;
  background: #fff;
  color: #222;
}
.nofilter {
  height: 10px;
  gap: 3px;
  width: 67px;
  padding-left: 6px;
  margin: 0 3px 0 2px;
  border: solid #c2c6ce;
  border-width: 0 1px;
  font-size: 7px;
}
.rec-search {
  width: 45px;
  height: 10px;
  padding-left: 1px;
  background: #fff;
  color: #222;
}
.scroll {
  flex: 1;
  align-self: stretch;
  background: linear-gradient(#f3f4f6 50%, #e4e6ea 50%);
}

/* Status bar */
.status {
  display: flex;
  align-items: center;
  height: 14px;
  padding: 0 7px 0 4px;
}
.mode {
  font-size: 7px;
}
.lock {
  margin-left: auto;
  margin-right: 13px;
}
.status button {
  justify-content: center;
  width: 24px;
  height: 14px;
}
.status .active {
  background: #cacaca;
}
</style>
